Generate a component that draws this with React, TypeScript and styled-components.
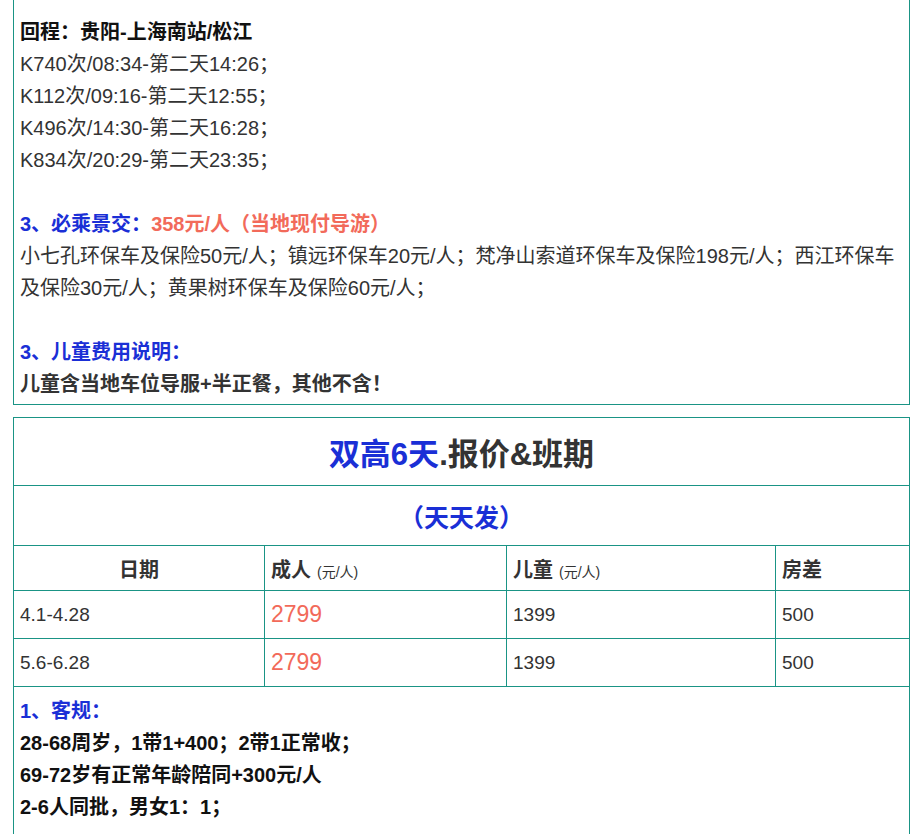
import React from "react";
import styled, { createGlobalStyle } from "styled-components";

const G = createGlobalStyle`
  body { margin: 0; background: #fff; font-family: Arial, "Liberation Sans", "Noto Sans CJK SC", sans-serif; color: #333; }
`;
const TEAL = "#1a9485";
const BLUE = "#1a2fd6";
const RED = "#f26a5a";

const Wrap = styled.div` padding: 0 10px 0 13px; width: 897px; `;
const Box = styled.div`
  border: 1px solid ${TEAL}; border-top: none;
  padding: 16px 6px 4px 6px; font-size: 20px; line-height: 32px;
`;
const Line = styled.div<{ $b?: boolean; $c?: string }>`
  font-weight: ${p => (p.$b ? 700 : 400)};
  color: ${p => p.$c || "#333"};
  min-height: 32px;
`;
const Red = styled.span` color: ${RED}; `;
const Table = styled.table`
  margin-top: 12px; width: 897px; border-collapse: collapse;
  td { border: 1px solid ${TEAL}; }
`;
const TitleCell = styled.td<{ $h: number; $fs: number }>`
  height: ${p => p.$h}px; text-align: center; font-weight: 700;
  font-size: ${p => p.$fs}px; color: #333; padding: 0;
`;
const B = styled.span` color: ${BLUE}; `;
const Cell = styled.td<{ $h: number; $center?: boolean }>`
  height: ${p => p.$h}px; padding: 0 6px; font-size: 19px;
  text-align: ${p => (p.$center ? "center" : "left")};
`;
const Hd = styled.span` font-weight: 700; font-size: 20px; `;
const Unit = styled.span` font-size: 14px; margin-left: 6px; `;
const Price = styled.span` color: ${RED}; font-size: 23px; `;
const Notes = styled.td`
  padding: 8px 6px; font-size: 20px; line-height: 32px; font-weight: 700; color: #111;
`;

export default function App() {
  return (
    <Wrap>
      <G />
      <Box>
        <Line $b $c="#111">回程：贵阳-上海南站/松江</Line>
        <Line>K740次/08:34-第二天14:26；</Line>
        <Line>K112次/09:16-第二天12:55；</Line>
        <Line>K496次/14:30-第二天16:28；</Line>
        <Line>K834次/20:29-第二天23:35；</Line>
        <Line />
        <Line $b $c={BLUE}>3、必乘景交：<Red>358元/人（当地现付导游）</Red></Line>
        <Line>小七孔环保车及保险50元/人；镇远环保车20元/人；梵净山索道环保车及保险198元/人；西江环保车及保险30元/人；黄果树环保车及保险60元/人；</Line>
        <Line />
        <Line $b $c={BLUE}>3、儿童费用说明：</Line>
        <Line $b>儿童含当地车位导服+半正餐，其他不含！</Line>
      </Box>
      <Table>
        <tbody>
          <tr><TitleCell colSpan={4} $h={67} $fs={31}><B>双高6天</B>.报价&amp;班期</TitleCell></tr>
          <tr><TitleCell colSpan={4} $h={59} $fs={25}><B>（天天发）</B></TitleCell></tr>
          <tr>
            <Cell $h={44} $center style={{ width: 238 }}><Hd>日期</Hd></Cell>
            <Cell $h={44} style={{ width: 229 }}><Hd>成人</Hd><Unit>(元/人)</Unit></Cell>
            <Cell $h={44} style={{ width: 256 }}><Hd>儿童</Hd><Unit>(元/人)</Unit></Cell>
            <Cell $h={44}><Hd>房差</Hd></Cell>
          </tr>
          {["4.1-4.28", "5.6-6.28"].map(d => (
            <tr key={d}>
              <Cell $h={47}>{d}</Cell>
              <Cell $h={47}><Price>2799</Price></Cell>
              <Cell $h={47}>1399</Cell>
              <Cell $h={47}>500</Cell>
            </tr>
          ))}
          <tr>
            <Notes colSpan={4}>
              <div style={{ color: BLUE }}>1、客规：</div>
              <div>28-68周岁，1带1+400；2带1正常收；</div>
              <div>69-72岁有正常年龄陪同+300元/人</div>
              <div>2-6人同批，男女1：1；</div>
              <div>&nbsp;</div>
            </Notes>
          </tr>
        </tbody>
      </Table>
    </Wrap>
  );
}
